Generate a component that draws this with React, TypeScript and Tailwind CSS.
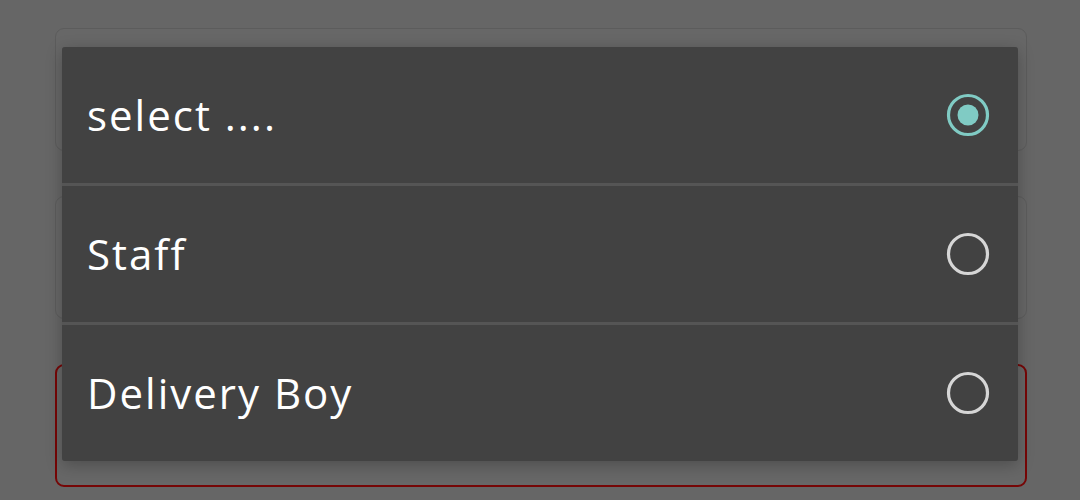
import React from "react";

function Radio({ checked }: { checked: boolean }) {
  return (
    <svg width="46" height="46" viewBox="0 0 46 46">
      <circle cx="23" cy="23" r="19.5" fill="none" stroke={checked ? "#80cbc4" : "#d6d6d6"} strokeWidth="3.2" />
      {checked && <circle cx="23" cy="23" r="10.5" fill="#80cbc4" />}
    </svg>
  );
}

export default function App() {
  const items = [
    { label: "select ....", checked: true },
    { label: "Staff", checked: false },
    { label: "Delivery Boy", checked: false },
  ];
  return (
    <div className="relative w-[1080px] h-[500px] overflow-hidden bg-[#666666]" style={{ fontFamily: "'Open Sans', Lato, sans-serif" }}>
      <div className="flex flex-col gap-[45px] pt-[28px] pl-[55px] pr-[53px]">
        <div className="h-[123px] rounded-[9px] border border-[#5c5c5c] bg-[#676767]" />
        <div className="h-[123px] rounded-[9px] border border-[#5c5c5c] bg-[#676767]" />
        <div className="h-[123px] rounded-[9px] border-2 border-[#760606] bg-[#676767]" />
      </div>
      <div className="absolute left-[62px] top-[47px] w-[956px] flex flex-col gap-[3px] bg-[#555555] rounded-[3px] shadow-[0_4px_16px_rgba(0,0,0,0.25)] overflow-hidden">
        {items.map((it) => (
          <div key={it.label} className="h-[136px] bg-[#424242] flex items-center justify-between pl-[25px] pr-[27px]">
            <span className="text-white text-[42px] leading-none tracking-[2px]">{it.label}</span>
            <Radio checked={it.checked} />
          </div>
        ))}
      </div>
    </div>
  );
}
